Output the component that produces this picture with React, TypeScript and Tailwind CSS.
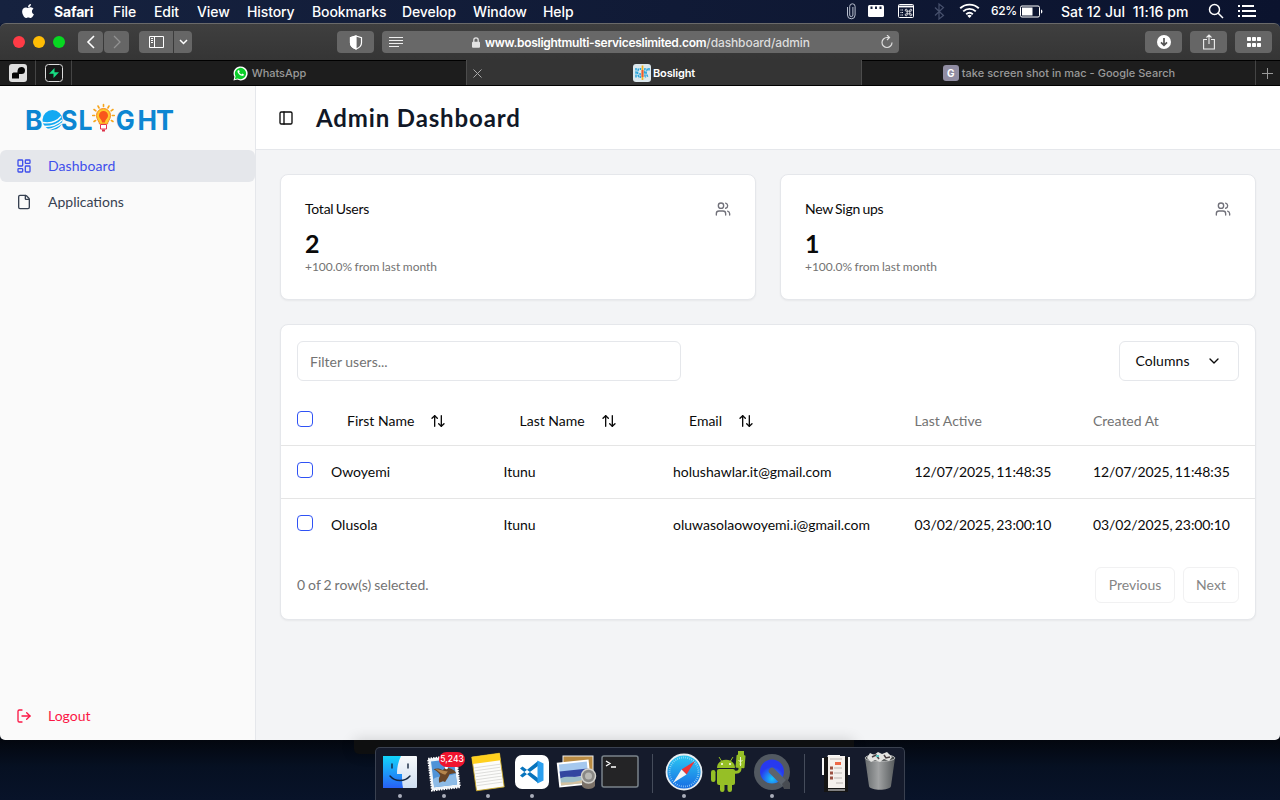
import React from "react";
import { ArrowUpDown, ChevronDown, File, LayoutDashboard, LogOut, PanelLeft, Users } from "lucide-react";
import { FaApple } from "react-icons/fa";

const MENUS = [
  { label: "File", cls: "w-[41px]" },
  { label: "Edit", cls: "w-[43px]" },
  { label: "View", cls: "w-[50px]" },
  { label: "History", cls: "w-[65px]" },
  { label: "Bookmarks", cls: "w-[90px]" },
  { label: "Develop", cls: "w-[71px]" },
  { label: "Window", cls: "w-[70px]" },
  { label: "Help", cls: "w-[40px]" },
];

function StatusIcons() {
  return (
    <svg width="145" height="23" viewBox="842 0 145 23" fill="none" stroke="#fff">
      <path d="M847.5 7v8a3.8 3.8 0 0 0 7.6 0V6.500a2.700 2.700 0 0 0-5.400 0v8.500a1.600 1.600 0 0 0 3.200 0V7" stroke="#b9c0cf" strokeWidth="1" />
      <rect x="868" y="5" width="16" height="12" rx="1.500" fill="#fff" stroke="none" />
      <path d="M871.500 6.500v2.500M876 6.500v2.500M880.500 6.500v2.500" stroke="#16203c" strokeWidth="2" />
      <rect x="898.500" y="4.500" width="15" height="13" rx="1" />
      <path d="M898.500 6.500h15" strokeWidth="1.800" />
      <path d="M900.500 10h2.500M900.500 12.500h2.500M900.500 15h2.500" strokeDasharray="1 .6" />
      <path d="M907.200 11.200h2.600v2.600h-2.600zM907.200 11.200h-1a1 1 0 1 1 1-1zM909.800 11.200v-1a1 1 0 1 1 1 1zM909.800 13.800h1a1 1 0 1 1-1 1zM907.200 13.800v1a1 1 0 1 1-1-1z" strokeWidth=".8" />
      <path d="m935 7.500 8.500 8-4.500 3.500V4l4.500 3.500-8.500 8" stroke="#46506c" strokeWidth="1.200" />
      <g strokeWidth="1.900">
        <path d="M960.200 8.300a13.500 13.500 0 0 1 18.600 0M963.200 11.400a9.200 9.200 0 0 1 12.600 0M966.200 14.300a5 5 0 0 1 6.600 0" />
      </g>
      <path d="m969.500 18-2.200-2.300a3.200 3.200 0 0 1 4.400 0z" fill="#fff" stroke="none" />
    </svg>
  );
}

function MacMenuBar() {
  return (
    <div className="flex h-[23px] items-center bg-linear-to-r from-[#16223f] to-[#0b132e] pb-px text-[14px] font-medium tracking-[-0.1px] text-white">
      <FaApple className="ml-5 size-[16px]" />
      <span className="ml-[18px] w-[59px] font-bold tracking-[-0.15px]">Safari</span>
      {MENUS.map((m) => (
        <span key={m.label} className={`${m.cls} whitespace-nowrap`}>{m.label}</span>
      ))}
      <div className="ml-auto flex items-center">
        <StatusIcons />
        <span className="ml-1 w-[29px] text-[12px] tracking-[-0.3px]">62%</span>
        <svg width="24" height="13" viewBox="0 0 24 13" fill="none" stroke="#fff">
          <rect x=".5" y="1" width="19" height="11" rx="1.500" />
          <rect x="2" y="2.500" width="10.500" height="8" fill="#fff" stroke="none" />
          <path d="M21 4.500c1.800.4 1.800 3.600 0 4z" fill="#fff" stroke="none" />
        </svg>
        <span className="ml-[17px] w-[128px] whitespace-pre tracking-[0.05px]">Sat 12 Jul  11:16 pm</span>
        <svg className="ml-[19px]" width="16" height="16" viewBox="0 0 16 16" fill="none" stroke="#fff" strokeWidth="1.500">
          <circle cx="6.500" cy="6.500" r="5" /><path d="m10 10 5 5" />
        </svg>
        <svg className="ml-[14px] mr-[23px]" width="19" height="14" viewBox="0 0 19 14" stroke="#fff" strokeWidth="2">
          <path d="M0 2h2M0 7h2M0 12h2M4 2h12M4 7h14M4 12h14" />
        </svg>
      </div>
    </div>
  );
}

function ToolButton({ className, children }: { className: string; children: React.ReactNode }) {
  return <div className={`flex h-[22px] items-center justify-center bg-[#666] text-white ${className}`}>{children}</div>;
}

function BrowserToolbar() {
  return (
    <div className="flex h-[37px] items-center rounded-t-[6px] border-t border-[#6a6a6a] bg-linear-to-b from-[#3f3f3f] to-[#353535] pl-[13px] pr-2">
      <div className="flex w-[65px] gap-2">
        <i className="size-3 rounded-full bg-[#ff3b46]" />
        <i className="size-3 rounded-full bg-[#ffbd05]" />
        <i className="size-3 rounded-full bg-[#07d821]" />
      </div>
      <ToolButton className="w-[25px] rounded-[4px]">
        <svg width="10" height="14" viewBox="0 0 10 14" fill="none" stroke="#fff" strokeWidth="1.600"><path d="M8 1 2 7l6 6" /></svg>
      </ToolButton>
      <ToolButton className="ml-px w-[25px] rounded-[4px]">
        <svg width="10" height="14" viewBox="0 0 10 14" fill="none" stroke="#929292" strokeWidth="1.300"><path d="m2 1 6 6-6 6" /></svg>
      </ToolButton>
      <ToolButton className="ml-[10px] w-[34px] rounded-l-[4px]">
        <svg width="15" height="12" viewBox="0 0 15 12" fill="none" stroke="#fff"><path d="M.5.500h14v11H.5zM5.500.500v11M2 2.500h2M2 4.500h2M2 6.500h2" /></svg>
      </ToolButton>
      <ToolButton className="ml-px w-[18px] rounded-r-[4px]">
        <svg width="9" height="6" viewBox="0 0 9 6" fill="none" stroke="#fff" strokeWidth="1.500"><path d="m1 1 3.500 3.500L8 1" /></svg>
      </ToolButton>
      <ToolButton className="ml-[145px] w-[37px] rounded-[4px]">
        <svg width="14" height="15" viewBox="0 0 14 15" fill="none" stroke="#fff" strokeWidth="1.200">
          <path d="M7 1 12.500 2.800v5C12.500 11 10 13 7 14 4 13 1.500 11 1.500 7.800v-5z" />
          <path d="M7 1v13C4 13 1.500 11 1.500 7.800v-5z" fill="#fff" />
        </svg>
      </ToolButton>
      <div className="ml-2 flex h-[22px] w-[517px] items-center rounded-[4px] bg-[#686868] pl-[7px] pr-[5px]">
        <svg width="14" height="11" viewBox="0 0 14 11" stroke="#eee"><path d="M0 .5h14M0 3.500h14M0 6.500h14M0 9.500h10" /></svg>
        <svg className="ml-[69px]" width="8" height="11" viewBox="0 0 8 11" fill="none" stroke="#e2e2e2"><path d="M1.800 5V3a2.200 2.200 0 0 1 4.400 0v2" strokeWidth="1.300" /><rect y="4.800" width="8" height="6" rx="1" fill="#e2e2e2" stroke="none" /></svg>
        <span className="ml-[5px] mt-px whitespace-nowrap text-[12px] font-semibold tracking-[-0.28px] text-white">
          www.boslightmulti-serviceslimited.com<span className="font-medium tracking-[-0.12px] text-[#ddd]">/dashboard/admin</span>
        </span>
        <svg className="ml-auto" width="14" height="14" viewBox="0 0 14 14" fill="none" stroke="#ddd" strokeWidth="1.200"><path d="M12 7.500A5 5 0 1 1 7 2.500h2M7 0l2.500 2.500L7 5" /></svg>
      </div>
      <div className="ml-auto flex gap-2">
        <ToolButton className="w-[37px] rounded-[4px]">
          <svg width="14" height="14" viewBox="0 0 14 14"><circle cx="7" cy="7" r="7" fill="#fff" /><path d="M7 3v7M4 7.300l3 3 3-3" fill="none" stroke="#555" strokeWidth="1.700" /></svg>
        </ToolButton>
        <ToolButton className="w-[37px] rounded-[4px]">
          <svg width="12" height="16" viewBox="0 0 12 16" fill="none" stroke="#eee" strokeWidth="1.100"><path d="M4 5.500H.6v9.500h10.800V5.500H8M6 10V1M3.500 3.500 6 1l2.500 2.500" /></svg>
        </ToolButton>
        <ToolButton className="w-[37px] rounded-[4px]">
          <svg width="14" height="10" viewBox="0 0 14 10" fill="#fff"><rect width="4" height="4" rx=".7" /><rect x="5" width="4" height="4" rx=".7" /><rect x="10" width="4" height="4" rx=".7" /><rect y="6" width="4" height="4" rx=".7" /><rect x="5" y="6" width="4" height="4" rx=".7" /><rect x="10" y="6" width="4" height="4" rx=".7" /></svg>
        </ToolButton>
      </div>
    </div>
  );
}

function TabStrip() {
  const idle = "flex items-center justify-center border-t border-black bg-[#1d1d1d]";
  return (
    <div className="flex h-[26px] border-b border-black text-[11px] font-medium text-[#999]">
      <div className={`${idle} w-9 border-r border-r-[#444]`}>
        <svg width="18" height="18" viewBox="0 0 18 18"><rect width="18" height="18" rx="3" fill="#dedede" /><path d="M3 9.500 4.500 8.500H8.500C8.500 6 9 3 12.500 3a3.500 3.500 0 0 1 0 7H10v4.500H3z" fill="#050505" /></svg>
      </div>
      <div className={`${idle} w-9 border-r border-r-[#444]`}>
        <svg width="18" height="18" viewBox="0 0 18 18"><rect x=".5" y=".5" width="17" height="17" rx="3" fill="#171717" stroke="#ddd" /><path d="M9.500 4v4.300h4.500L8.500 14V9.700H4z" fill="#17dc83" /></svg>
      </div>
      <div className={`${idle} w-[394px] gap-1 pl-px`}>
        <svg width="15" height="15" viewBox="0 0 16 16"><path d="M.5 15.500 1.500 11.500A7.500 7.500 0 1 1 4.500 14.500z" fill="#fff" /><path d="m2 14 .8-3a6 6 0 1 1 2.200 2.200z" fill="#0bce2a" /><path d="M5.500 4.500c-1 .5-1 2 .3 3.600s3 2.700 4.500 2.400c1-.3 1.500-1 1.300-1.500l-1.700-.9-.9.9c-1-.3-2-1.300-2.500-2.300l.7-.8-.7-1.500z" fill="#fff" /></svg>
        <span className="tracking-[-0.02px]">WhatsApp</span>
      </div>
      <div className="flex w-[396px] items-center border-x border-x-[#4c4c4c] bg-[#343434] pt-px text-white">
        <svg className="ml-[6px]" width="9" height="9" viewBox="0 0 9 9" stroke="#aaa"><path d="m.5.500 8 8m0-8-8 8" /></svg>
        <svg className="ml-[151px]" width="18" height="18" viewBox="0 0 18 18">
          <rect width="18" height="18" rx="3" fill="#dce8ed" />
          <path d="M3 4v10M5.500 4.500 4.500 9l1.500 5M7.500 4v2M7 9l.5 5M12 4l-.5 5 1 5M14.500 4.500 13 9l2 4.500M16 4v3" fill="none" stroke="#2aa5dc" strokeWidth="1.500" strokeDasharray="2.500 .7" />
          <path d="M9.500 1.500V16" stroke="#f5b21d" strokeWidth="1.700" /><path d="M9.500 6v7" stroke="#ee5b35" strokeWidth="2" />
        </svg>
        <span className="ml-[2px] font-semibold tracking-[-0.15px]">Boslight</span>
      </div>
      <div className={`${idle} w-[393px] gap-[3px] pl-px`}>
        <span className="flex size-4 items-center justify-center rounded-[3px] bg-[#918da3] text-[10px] font-bold text-white">G</span>
        <span className="tracking-[0.01px]">take screen shot in mac - Google Search</span>
      </div>
      <div className={`${idle} flex-1 border-l border-l-[#444] pr-px`}>
        <svg width="11" height="11" viewBox="0 0 11 11" stroke="#999"><path d="M0 5.500h11M5.500 0v11" /></svg>
      </div>
    </div>
  );
}

function Logo() {
  return (
    <svg width="160" height="46" viewBox="20 95 160 46" fontFamily="Inter, sans-serif" fontWeight="700" fontSize="27" fill="#0c86d2">
      <text x="25" y="129.700" textLength="17.500" lengthAdjust="spacingAndGlyphs">B</text>
      <text x="61" y="129.700" textLength="16.500" lengthAdjust="spacingAndGlyphs">S</text>
      <circle cx="52.500" cy="120" r="10" fill="#12a9f2" />
      <path d="M43 122.500c7 1 14-1 18-6M44 126.500c7 0 14-2 18-6.500M48 129.500c6-1 10-3 14-6.500" fill="none" stroke="#fafafa" strokeWidth="1.300" />
      <text x="78.500" y="129.700" textLength="14" lengthAdjust="spacingAndGlyphs">L</text>
      <g stroke="#f7a51c" strokeWidth="1.600" strokeLinecap="round">
        <path d="M103.500 104.500v2M98 106l1.100 2M109 106l-1.100 2M94 109.500l1.900 1.300M113 109.500l-1.900 1.300M92.700 115.500h2M114.300 115.500h-2M94 121.500l1.600-1M113 121.500l-1.600-1" />
      </g>
      <path d="M99.500 124c0-2.500-3-4.500-3-8.500a7 7 0 0 1 14 0c0 4-3 6-3 8.500z" fill="#ffc92c" stroke="#f58a24" />
      <path d="M102 122.500c0-3-3-4-3-7a4.500 4.500 0 0 1 9 0c0 3-3 4-3 7z" fill="#f9561c" />
      <path d="M100.500 124.500h6v4.500h-6z" fill="#fff" stroke="#e8334c" />
      <path d="M102 130.500h3" stroke="#dc3149" strokeWidth="2" />
      <text x="115.700" y="129.700" textLength="19" lengthAdjust="spacingAndGlyphs">G</text>
      <text x="137.500" y="129.700" textLength="19.500" lengthAdjust="spacingAndGlyphs">H</text>
      <text x="156" y="129.700" textLength="18" lengthAdjust="spacingAndGlyphs">T</text>
    </svg>
  );
}

function Sidebar() {
  return (
    <aside className="flex w-64 flex-col border-r border-[#e5e7eb] bg-[#fafafa] text-[14px]">
      <div className="h-16 pl-5 pt-[9px]"><Logo /></div>
      <div className="flex h-8 items-center gap-4 rounded-md bg-[#e5e7eb] px-4 text-[#3f4fec]"><LayoutDashboard className="size-4" /><span className="mb-0.5 tracking-[0.08px]">Dashboard</span></div>
      <div className="mt-1 flex h-8 items-center gap-4 px-4 text-[#374151]"><File className="size-4" /><span className="mb-0.5">Applications</span></div>
      <div className="mb-2 mt-auto flex h-8 items-center gap-4 px-4 text-[#fb1746]"><LogOut className="size-4" /><span className="mb-0.5">Logout</span></div>
    </aside>
  );
}

function StatCard({ title, value }: { title: string; value: string }) {
  return (
    <div className="h-[126px] rounded-lg border border-[#e5e7eb] bg-white px-6 pt-6 shadow-[0_1px_2px_rgba(0,0,0,0.05)]">
      <div className="flex h-5 items-center justify-between text-[14px] tracking-[-0.25px] [word-spacing:-1px]"><span className="mb-0.5">{title}</span><Users className="size-4 text-[#71717a]" /></div>
      <div className="mt-2 text-[25px] font-bold leading-8">{value}</div>
      <div className="text-[12px] leading-4 tracking-[-0.04px] text-[#737373] [word-spacing:-0.4px]">+100.0% from last month</div>
    </div>
  );
}

const COLS = "grid grid-cols-[34px_172.5px_169.5px_241.5px_178.5px_1fr] items-center";
const ROWS = [
  ["Owoyemi", "Itunu", "holushawlar.it@gmail.com", "12/07/2025, 11:48:35"],
  ["Olusola", "Itunu", "oluwasolaowoyemi.i@gmail.com", "03/02/2025, 23:00:10"],
];

function Check() {
  return <span className="mb-1 ml-4 block size-4 rounded-[4px] border border-[#2f52f5]" />;
}

function SortHead({ label }: { label: string }) {
  return <span className="flex items-center gap-4 pl-8"><span className="mb-0.5">{label}</span><ArrowUpDown className="size-4" /></span>;
}

function UsersTable() {
  const cell = "mb-0.5 pl-4";
  const date = "mb-0.5 pl-4 tracking-[-0.11px] [word-spacing:-1.2px]";
  return (
    <div className="mt-6 h-[296px] rounded-lg border border-[#e5e7eb] bg-white text-[14px] shadow-[0_1px_2px_rgba(0,0,0,0.05)]">
      <div className="flex justify-between p-4">
        <div className="flex h-10 w-96 items-center rounded-md border border-[#e5e7eb] px-3 pt-px text-[#737373]">Filter users...</div>
        <div className="flex h-10 w-[120px] items-center justify-between rounded-md border border-[#e5e7eb] pl-[15.500px] pr-4"><span className="mb-0.5 tracking-[0.05px]">Columns</span><ChevronDown className="size-4" /></div>
      </div>
      <div className={`${COLS} h-[49px] border-b border-[#e5e5e5]`}>
        <Check />
        <SortHead label="First Name" /><SortHead label="Last Name" /><SortHead label="Email" />
        <span className={`${cell} text-[#737373]`}>Last Active</span>
        <span className={`${cell} text-[#737373]`}>Created At</span>
      </div>
      {ROWS.map((r, i) => (
        <div key={r[0]} className={`${COLS} ${i === 0 ? "h-[53px] border-b border-[#e5e5e5]" : "h-[52px]"}`}>
          <Check />
          <span className={cell}>{r[0]}</span><span className={cell}>{r[1]}</span><span className={cell}>{r[2]}</span>
          <span className={date}>{r[3]}</span><span className={date}>{r[3]}</span>
        </div>
      ))}
      <div className="flex items-center gap-2 px-4 pt-4 text-[#737373]">
        <span className="mb-0.5 mr-auto [word-spacing:-0.6px]">0 of 2 row(s) selected.</span>
        <span className="flex h-9 w-20 items-center justify-center rounded-md border border-[#f1f1f2] pb-0.5 text-[#858585]">Previous</span>
        <span className="flex h-9 w-14 items-center justify-center rounded-md border border-[#f1f1f2] pb-0.5 text-[#858585]">Next</span>
      </div>
    </div>
  );
}

function DockIcon({ children, dot, badge }: { children: React.ReactNode; dot?: boolean; badge?: string }) {
  return (
    <div className="relative flex w-11 flex-col items-center">
      <svg width="44" height="44" viewBox="0 0 44 44">{children}</svg>
      {dot && <i className="size-1 rounded-full bg-[#a9adba]" />}
      {badge && <span className="absolute left-[17px] top-[2px] flex h-[15px] w-[26px] items-center justify-center rounded-full bg-[#f0142f] text-[8.500px] font-medium text-white">{badge}</span>}
    </div>
  );
}

function Dock() {
  return (
    <div className="flex h-[60px] justify-center bg-[linear-gradient(180deg,#03070f,#061022_45%,#081329)]">
      <div className="relative flex w-full justify-center">
        <div className="absolute left-[354px] top-0 h-[14px] w-[500px] rounded-b-[5px] bg-[#0e0f10] shadow-[0_0_14px_rgba(0,0,0,0.16)]" />
        <div className="relative mt-[7px] flex w-[530px] rounded-t-[5px] border border-b-0 border-[#3a4150] bg-[#151b2c] pl-[2px] pt-[2px]">
          <DockIcon dot>
            <defs>
              <linearGradient id="fl" x2="0" y2="1"><stop stopColor="#12d5fb" /><stop offset="1" stopColor="#2860f4" /></linearGradient>
              <linearGradient id="fr" x2="0" y2="1"><stop stopColor="#f8fafc" /><stop offset="1" stopColor="#cfdef1" /></linearGradient>
            </defs>
            <rect x="5" y="6" width="34" height="32" rx="1" fill="url(#fr)" />
            <path d="M5 6h18c-3 6-4 12-4 18h5c0 5 0 9 1 14H5z" fill="url(#fl)" />
            <path d="M14 14v4M30 14v4M12 26c5 6 15 6 20 0" fill="none" stroke="#14263f" strokeWidth="1.400" strokeLinecap="round" />
          </DockIcon>
          <DockIcon dot badge="5,243">
            <g transform="rotate(-7 22 23)">
              <rect x="8" y="7" width="28" height="32" fill="#eef3f7" stroke="#fff" strokeDasharray="1.500 1" strokeWidth="2" />
              <rect x="10.500" y="10" width="23" height="26" fill="#4f93d8" />
              <path d="M10.500 28c6-4 14 0 23-3v11h-23z" fill="#8dbbe6" />
              <path d="M12 18c3-1 7 0 9 2l4-3 3 2c3 1 6 4 6 6-3-1-5 0-7 0-1 3-3 4-5 7l-2-1-4 1c0-3 0-5 2-7-1-3-3-5-6-7z" fill="#694527" />
              <path d="M14 18c4 1 8 3 12 4l-3 3c-3-1-6-4-9-7z" fill="#b5854c" /><circle cx="25" cy="18" r="1.600" fill="#fff" />
            </g>
          </DockIcon>
          <DockIcon dot>
            <g transform="rotate(-8 22 22)">
              <rect x="8" y="5" width="28" height="34" fill="#fcfcfa" stroke="#c9a51c" strokeWidth=".8" />
              <path d="M8 5h28v7H8z" fill="#ffd01e" />
              <path d="M9 16h26M9 19h26M9 22h26M9 25h26M9 28h26M9 31h26M9 34h26" stroke="#d2d2d0" strokeWidth=".7" />
            </g>
          </DockIcon>
          <DockIcon dot>
            <rect x="5" y="5" width="34" height="34" rx="7" fill="#fff" />
            <path d="m10 18.500 2.500-2L28 28v5zM10 25.500l2.500 2L28 16v-5z" fill="#0874bd" />
            <path d="m27.500 10.500 6 3v17l-6 3z" fill="#2b9fef" />
          </DockIcon>
          <DockIcon>
            <rect x="9" y="6" width="30" height="24" fill="#b98b43" stroke="#eee" />
            <g transform="rotate(-6 20 24)">
              <rect x="4" y="11" width="32" height="25" fill="#fff" /><path d="M6 13h28v10H6z" fill="#a5c8ee" /><path d="M6 20h28v7H6z" fill="#3346a0" /><path d="M6 27c8-3 17 3 28-1v8H6z" fill="#9bbdc8" /><path d="m6 31 12 1 16-2v4H6z" fill="#d4c2a0" />
            </g>
            <path d="M28 28h13v8c-2 4-11 4-13 0z" fill="#7b7168" /><circle cx="34.500" cy="26" r="7" fill="#8a8986" stroke="#d2d1cc" strokeWidth="1.500" /><circle cx="34.500" cy="26" r="3.500" fill="#b9b9b5" />
          </DockIcon>
          <DockIcon>
            <rect x="4" y="6" width="36" height="31" rx="2" fill="#242426" stroke="#79838a" strokeWidth="1.500" />
            <path d="m8 11 4 2.500L8 16M13 17h5" fill="none" stroke="#fff" strokeWidth="1.300" />
          </DockIcon>
          <div className="ml-[10px] mt-1 h-[39px] w-px bg-[#454c5b]" />
          <div className="w-[9px]" />
          <DockIcon dot>
            <defs><linearGradient id="sf" x2="0" y2="1"><stop stopColor="#2ccbf3" /><stop offset="1" stopColor="#176ae3" /></linearGradient></defs>
            <circle cx="22" cy="22" r="17.500" fill="url(#sf)" stroke="#e7edf1" strokeWidth="1.800" />
            <circle cx="22" cy="22" r="14.500" fill="none" stroke="#b9e4fa" strokeWidth="1.800" strokeDasharray=".6 1.500" />
            <path d="m33 11-8.500 13.500-5-5z" fill="#ef3434" /><path d="m11 33 8.500-13.500 5 5z" fill="#f4f4f4" />
          </DockIcon>
          <DockIcon>
            <g fill="#96bf26">
              <path d="M11 18c0-11 18-11 18 0z" /><rect x="11" y="19" width="18" height="16" rx="2" />
              <rect x="5" y="20" width="4.500" height="12" rx="2.200" /><rect x="14" y="30" width="4.500" height="12" rx="2.200" /><rect x="21.500" y="30" width="4.500" height="12" rx="2.200" />
              <path d="m13 7 2.500 4M27 7l-2.500 4" stroke="#96bf26" strokeWidth="1" />
              <path d="M28 22c7 1 6-3 6-6" fill="none" stroke="#96bf26" strokeWidth="3" /><rect x="30" y="5" width="9" height="13" rx="1" transform="rotate(5 35 12)" /><rect x="32" y="1" width="6" height="5" />
            </g>
            <circle cx="16" cy="14" r="1" fill="#fff" /><circle cx="24" cy="14" r="1" fill="#fff" />
            <path d="M34.500 7v9m-2-6 2 2 2-2m-3 4h2" fill="none" stroke="#e9f5d0" />
          </DockIcon>
          <DockIcon dot>
            <defs><radialGradient id="qt" cy=".8"><stop stopColor="#18c8f7" /><stop offset="1" stopColor="#2739ef" /></radialGradient></defs>
            <circle cx="22" cy="22" r="18" fill="#525961" /><circle cx="22" cy="21.500" r="12" fill="url(#qt)" />
            <path d="m22 21 14 14" stroke="#5d646c" strokeWidth="6.500" strokeLinecap="round" /><path d="M32 34l5-5 3 4v6h-6z" fill="#474b51" />
          </DockIcon>
          <div className="ml-[10px] mt-1 h-[39px] w-px bg-[#454c5b]" />
          <div className="w-[9px]" />
          <DockIcon>
            <path d="M8 8h5l1-3h12v2h10v18H8z" fill="#f7f7f7" /><rect x="10" y="7" width="24" height="35" fill="#151515" /><rect x="14" y="6" width="17" height="32" fill="#f5f1ed" />
            <path d="M16 9h12M20 18h8M20 23h8M20 28h8M22 33h7" stroke="#bbb5b1" /><rect x="21" y="12" width="6" height="3" fill="#ed6947" /><path d="M16 18h3M16 23h3M16 28h3" stroke="#9b5142" strokeWidth="3" />
            <path d="M14 40h17" stroke="#eee" />
          </DockIcon>
          <DockIcon>
            <defs><linearGradient id="tr"><stop stopColor="#686c6e" /><stop offset=".45" stopColor="#a0a2a3" /><stop offset="1" stopColor="#565a5c" /></linearGradient></defs>
            <path d="m7 8 4 28c1 5 21 5 22 0l4-28z" fill="url(#tr)" /><ellipse cx="22" cy="8" rx="15" ry="3.500" fill="#4c5051" stroke="#b0b2b3" />
            <path d="m9 8 3-5 4 2 4-3 4 2 5-2 5 5-3 4-5-2-4 3-5-2-4 2z" fill="#e4e4e2" /><path d="m14 7 4-2 3 4M26 5l2 3 4-1" fill="none" stroke="#4b4144" strokeWidth="1.500" /><path d="M18 6h3" stroke="#5ac4c2" strokeWidth="2" />
          </DockIcon>
        </div>
      </div>
    </div>
  );
}

export default function App() {
  return (
    <div className="flex h-[800px] w-[1280px] flex-col overflow-hidden bg-[#03070f] font-['Inter',sans-serif] text-[#0a0a0a]">
      <div className="bg-[#101b38]">
        <MacMenuBar />
        <BrowserToolbar />
      </div>
      <TabStrip />
      <div className="flex h-[654px] overflow-hidden rounded-b-[5px] font-['Lato',sans-serif]">
        <Sidebar />
        <main className="flex-1 bg-[#f3f4f6]">
          <header className="flex h-16 items-center border-b border-[#e5e7eb] bg-white pl-[22px]">
            <PanelLeft className="size-4" />
            <h1 className="ml-[22px] text-[24px] font-bold tracking-[0.870px] text-[#111827]">Admin Dashboard</h1>
          </header>
          <div className="p-6">
            <div className="grid grid-cols-2 gap-6">
              <StatCard title="Total Users" value="2" />
              <StatCard title="New Sign ups" value="1" />
            </div>
            <UsersTable />
          </div>
        </main>
      </div>
      <Dock />
    </div>
  );
}
